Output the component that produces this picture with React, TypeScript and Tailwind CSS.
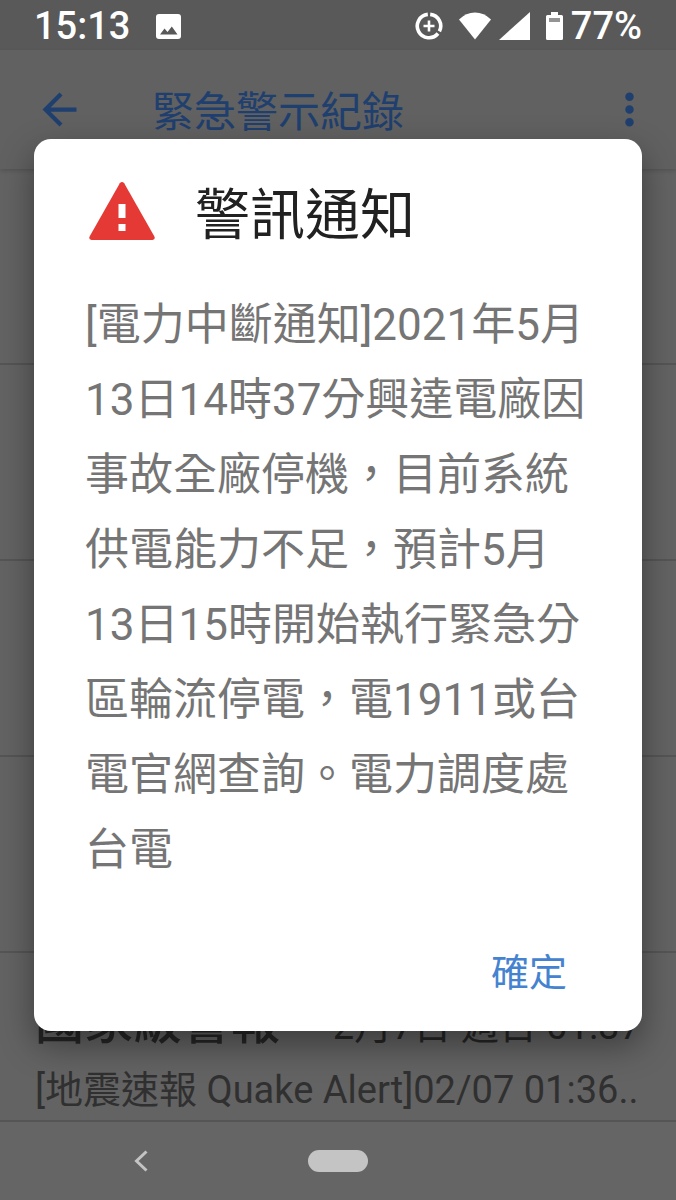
import { MdArrowBack, MdMoreVert } from 'react-icons/md';

const alertText =
  '[電力中斷通知]2021年5月13日14時37分興達電廠因事故全廠停機，目前系統供電能力不足，預計5月13日15時開始執行緊急分區輪流停電，電1911或台電官網查詢。電力調度處台電';

const olderRows = [1, 2, 3, 4];

function PictureIcon() {
  return (
    <svg viewBox="0 0 25 25" className="w-[25px] h-[25px]" aria-hidden="true">
      <rect width="25" height="25" rx="3" fill="#fff" />
      <path d="M4 20.500L8.500 14.500L11.500 18L15.800 12.500L21.500 20.500Z" fill="#595959" />
    </svg>
  );
}

function DataSaverIcon() {
  return (
    <svg viewBox="0 0 28 28" className="w-7 h-7" fill="none" stroke="#fff" aria-hidden="true">
      <path d="M15.200 2.400A11.700 11.700 0 0 1 24.400 19.400" strokeWidth="3.600" />
      <path d="M12.800 2.400A11.700 11.700 0 1 0 23 21.500" strokeWidth="3.600" />
      <path d="M14 8.500V19.500M8.500 14H19.500" strokeWidth="2.600" />
    </svg>
  );
}

function WifiIcon() {
  return (
    <svg viewBox="0 0 32 28" className="w-8 h-7" fill="#fff" aria-hidden="true">
      <path d="M0 7.500Q7 0.500 16 0.500Q25 0.500 32 7.500L16 27.500Z" />
    </svg>
  );
}

function SignalIcon() {
  return (
    <svg viewBox="0 0 31 28" className="w-[31px] h-7" fill="#fff" aria-hidden="true">
      <path d="M31 0V28H0Z" />
    </svg>
  );
}

function BatteryIcon() {
  return (
    <svg viewBox="0 0 17 28" className="w-[17px] h-7" fill="#fff" aria-hidden="true">
      <path d="M5 0H12V3H15.500Q17 3 17 4.500V26.500Q17 28 15.500 28H1.500Q0 28 0 26.500V4.500Q0 3 1.500 3H5Z" />
      <path d="M3 6H14V10H3Z" fill="#949494" />
    </svg>
  );
}

function WarningIcon() {
  return (
    <svg viewBox="0 0 66 58" className="w-[66px] h-[58px]" aria-hidden="true">
      <path
        d="M30.800 1.300Q33 -1.200 35.200 1.300L65.400 54.500Q66.600 57.700 63.500 58H2.500Q-0.600 57.700 0.600 54.500Z"
        fill="#e53935"
      />
      <path d="M29.500 22H36.500V36H29.500ZM29.500 42H36.500V49H29.500Z" fill="#fff" />
    </svg>
  );
}

function StatusBar() {
  return (
    <div className="flex h-[50px] items-center bg-[#595959] px-[34px] pt-0.5 text-[38px] font-medium text-white">
      <span>15:13</span>
      <div className="ml-[26px]">
        <PictureIcon />
      </div>
      <div className="ml-auto flex items-center">
        <DataSaverIcon />
        <div className="ml-4">
          <WifiIcon />
        </div>
        <div className="ml-2">
          <SignalIcon />
        </div>
        <div className="ml-4">
          <BatteryIcon />
        </div>
        <span className="ml-2">77%</span>
      </div>
    </div>
  );
}

function AppHeader() {
  return (
    <header className="flex h-[119px] items-center bg-[#616161] pl-[34px] pr-[21px] text-[#1f3f6f] shadow-[0_2px_4px_rgba(0,0,0,0.15)]">
      <button type="button" aria-label="返回">
        <MdArrowBack size={51} />
      </button>
      <h1 className="ml-[67px] pt-1.5 text-[42px] leading-[60px]">緊急警示紀錄</h1>
      <button type="button" aria-label="更多" className="ml-auto">
        <MdMoreVert size={51} />
      </button>
    </header>
  );
}

function NavigationBar() {
  return (
    <nav className="grid h-[78px] grid-cols-[1fr_auto_1fr] items-center bg-[#656565]">
      <button type="button" aria-label="上一頁" className="ml-[134px] justify-self-start">
        <svg viewBox="0 0 14 22" className="h-[22px] w-[14px]" fill="none" stroke="#c4c4c4" strokeWidth="3">
          <path d="M12.500 1.500L2.500 11L12.500 20.500" />
        </svg>
      </button>
      <button type="button" aria-label="主畫面" className="h-[22px] w-[60px] rounded-full bg-[#c4c4c4]" />
    </nav>
  );
}

export default function App() {
  return (
    <div
      lang="zh-Hant"
      className="relative flex min-h-screen flex-col bg-[#636363] font-['Roboto','Noto_Sans_CJK_TC',sans-serif]"
    >
      <StatusBar />
      <AppHeader />

      <ul className="grow">
        {olderRows.map((row) => (
          <li key={row} className="h-[196px] border-b-2 border-[#555555]" />
        ))}
        <li className="h-[169px] overflow-hidden border-b-2 border-[#555555] px-[35px] pt-[38px]">
          <div className="flex items-baseline justify-between text-[#262626]">
            <span className="text-[49px] leading-[64px] font-medium">國家級警報</span>
            <span className="text-[38px] leading-[64px]">2月7日 週日 01:37</span>
          </div>
          <p className="mt-0.5 whitespace-nowrap text-[38px] leading-[60px] text-[#303030]">
            [地震速報 Quake Alert]02/07 01:36..
          </p>
        </li>
      </ul>

      <NavigationBar />

      <div className="absolute inset-0 flex items-center px-[34px] pt-[50px] pb-20">
        <div
          role="dialog"
          aria-labelledby="alert-title"
          className="w-full rounded-[17px] bg-white px-[51px] pt-[43px] pb-7 shadow-[0_14px_34px_rgba(0,0,0,0.4)]"
        >
          <div className="flex items-start pl-1">
            <WarningIcon />
            <h2 id="alert-title" className="ml-10 text-[55px] leading-[66px] text-[#212121]">
              警訊通知
            </h2>
          </div>
          <p className="mt-10 text-[44px] leading-[75px] text-[#757575]">{alertText}</p>
          <div className="mt-[55px] flex justify-end pr-6">
            <button type="button" className="text-[38px] leading-[60px] text-[#4583d0]">
              確定
            </button>
          </div>
        </div>
      </div>
    </div>
  );
}
